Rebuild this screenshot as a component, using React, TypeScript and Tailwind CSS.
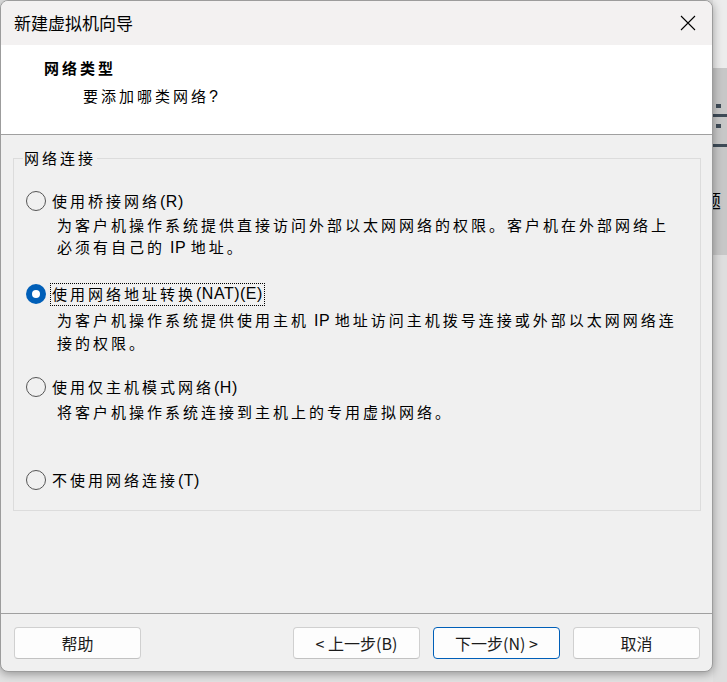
import React from "react";

const CJK = "font-['Noto_Sans_CJK_SC',sans-serif]";

// splits text into CJK runs (spaced out like SimSun) and latin runs
function Txt({ s }: { s: string }) {
  const parts = s.match(/[\u3000-\u9fff\uff00-\uffef]+|[^\u3000-\u9fff\uff00-\uffef]+/g) ?? [];
  return (
    <>
      {parts.map((p, i) =>
        /[\u3000-\u9fff\uff00-\uffef]/.test(p) ? (
          <span key={i} className="font-['Noto_Sans_CJK_SC',sans-serif] text-[15px] tracking-[3px]">
            {p}
          </span>
        ) : (
          <span
            key={i}
            className="font-['Liberation_Sans','Noto_Sans_CJK_SC',sans-serif] text-[16px] tracking-[0.5px] whitespace-pre"
          >
            {p}
          </span>
        )
      )}
    </>
  );
}

function Radio({ checked }: { checked?: boolean }) {
  if (checked) {
    return (
      <span className="flex h-5 w-5 shrink-0 items-center justify-center rounded-full bg-[#005fb8]">
        <span className="h-2 w-2 rounded-full bg-white" />
      </span>
    );
  }
  return <span className="h-5 w-5 shrink-0 rounded-full border-[1.5px] border-[#555]" />;
}

function Option({
  label,
  lines,
  checked,
  className,
  descGap,
}: {
  label: string;
  lines: string[];
  checked?: boolean;
  className?: string;
  descGap?: string;
}) {
  return (
    <div className={className}>
      <div className="flex h-[22px] items-center">
        <Radio checked={checked} />
        <span
          className={
            checked
              ? "ml-[4px] flex h-[23px] items-center border border-dotted border-black px-[1px] leading-[22px]"
              : "ml-[6px] leading-[22px]"
          }
        >
          <Txt s={label} />
        </span>
      </div>
      {lines.length > 0 && (
        <div className={`pl-[31px] ${descGap ?? "mt-[2px]"}`}>
          {lines.map((l) => (
            <div key={l} className="leading-[22px] whitespace-nowrap">
              <Txt s={l} />
            </div>
          ))}
        </div>
      )}
    </div>
  );
}

function Button({ children, primary }: { children: React.ReactNode; primary?: boolean }) {
  return (
    <button
      className={`flex h-[32px] w-[127px] items-center justify-center rounded-[4px] border bg-[#fdfdfd] text-[16px] text-[#1b1b1b] ${CJK} ${
        primary ? "border-[#005fb8]" : "border-[#d0d0d0] border-b-[#c2c2c2]"
      }`}
    >
      {children}
    </button>
  );
}

export default function App() {
  return (
    <div className="relative flex h-[682px] w-[727px] overflow-hidden bg-[#e2e2e2] text-black">
      <div className="relative z-10 flex h-[672px] w-[713px] shrink-0 flex-col overflow-hidden rounded-[8px] border border-[#9c9c9c] bg-[#f0f0f0] shadow-[0_2px_10px_rgba(0,0,0,0.35)]">
        {/* title bar */}
        <div className="flex h-[44px] shrink-0 items-center justify-between bg-[#f3f1f1] pl-[13px] pr-[16px]">
          <span className={`${CJK} text-[17px] leading-[22px]`}>新建虚拟机向导</span>
          <svg width="16" height="16" viewBox="0 0 16 16" fill="none" stroke="#000" strokeWidth="1.1">
            <path d="M1 1 L15 15 M15 1 L1 15" />
          </svg>
        </div>

        {/* header */}
        <div className="h-[89px] shrink-0 bg-white pl-[43px] pt-[12px]">
          <div className="font-bold leading-[22px]">
            <Txt s="网络类型" />
          </div>
          <div className="ml-[39px] mt-[6px] leading-[22px]">
            <Txt s="要添加哪类网络?" />
          </div>
        </div>
        <div className="h-px shrink-0 bg-[#a0a0a0]" />

        {/* content */}
        <div className="h-[478px] shrink-0 pt-[23px]">
          <div className="relative ml-[12px] w-[688px] border border-[#dcdcdc] pb-[19px] pl-[12px] pt-[31px]">
            <span className="absolute left-[9px] top-[-12px] bg-[#f0f0f0] px-[1px] leading-[22px]">
              <Txt s="网络连接" />
            </span>
            <Option
              label="使用桥接网络(R)"
              lines={["为客户机操作系统提供直接访问外部以太网网络的权限。客户机在外部网络上", "必须有自己的 IP 地址。"]}
            />
            <Option
              className="mt-[24px]"
              checked
              descGap="mt-[4px]"
              label="使用网络地址转换(NAT)(E)"
              lines={["为客户机操作系统提供使用主机 IP 地址访问主机拨号连接或外部以太网网络连", "接的权限。"]}
            />
            <Option
              className="mt-[22px]"
              descGap="mt-[3px]"
              label="使用仅主机模式网络(H)"
              lines={["将客户机操作系统连接到主机上的专用虚拟网络。"]}
            />
            <Option className="mt-[46px]" label="不使用网络连接(T)" lines={[]} />
          </div>
        </div>
        <div className="h-px shrink-0 bg-[#a0a0a0]" />

        {/* footer */}
        <div className="flex flex-1 items-start pl-[13px] pr-[12px] pt-[13px]">
          <Button>帮助</Button>
          <div className="flex-1" />
          <div className="flex gap-[13px]">
            <Button>&lt; 上一步(B)</Button>
            <Button primary>下一步(N) &gt;</Button>
            <Button>取消</Button>
          </div>
        </div>
      </div>

      {/* part of the window behind */}
      <div className="flex flex-1 flex-col">
        <div className="h-[68px] bg-[#ececec]" />
        <div className="flex h-[187px] flex-col bg-[#c7c7c7]">
          <div className="mt-[36px] ml-[3px] h-[4px] w-[5px] bg-[#3e4b57]" />
          <div className="mt-[6px] h-[3px] bg-[#3e4b57]" />
          <div className="mt-[7px] ml-[3px] h-[4px] w-[5px] bg-[#3e4b57]" />
          <div className="mt-[16px] h-[3px] bg-[#3e4b57]" />
          <div className={`mt-[42px] -ml-[10px] text-[18px] leading-[22px] ${CJK}`}>题</div>
        </div>
        <div className="flex-1 bg-[#dedede]" />
      </div>
    </div>
  );
}
